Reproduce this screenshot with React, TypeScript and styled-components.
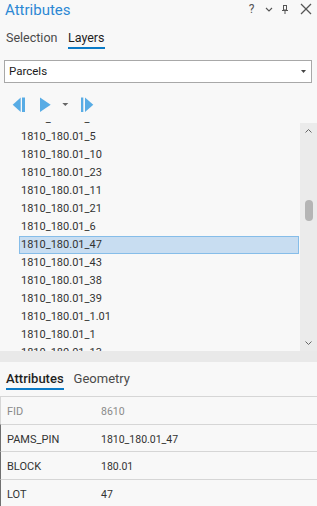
import React from "react";
import styled, { createGlobalStyle } from "styled-components";

const GlobalStyle = createGlobalStyle`
  html, body { margin: 0; padding: 0; background: #f8f8f8; }
  body { font-family: Roboto, "Liberation Sans", sans-serif; }
`;

const Pane = styled.div`
  width: 317px;
  height: 506px;
  overflow: hidden;
  background: #f8f8f8;
  display: flex;
  flex-direction: column;
  font-family: Roboto, "Liberation Sans", sans-serif;
  color: #333;
`;

const Header = styled.div`
  display: flex;
  align-items: flex-start;
  height: 21px;
  padding: 0 3px 0 5px;
`;

const Title = styled.div`
  font-size: 15px;
  line-height: 21px;
  color: #2d88d4;
`;

const Controls = styled.div`
  margin-left: auto;
  margin-top: 1px;
  display: flex;
  align-items: center;
`;

const CaptionButton = styled.div<{ $w: number; $ml?: number }>`
  width: ${(p) => p.$w}px;
  height: 16px;
  margin-left: ${(p) => p.$ml ?? 0}px;
  display: flex;
  align-items: center;
  justify-content: center;
  color: #555;
  font-size: 12px;
  line-height: 16px;
`;

const TabBar = styled.div<{ $top: number; $gap: number }>`
  display: flex;
  padding: ${(p) => p.$top}px 0 0 6px;
  gap: ${(p) => p.$gap}px;
`;

const Tab = styled.div<{ $active?: boolean; $size: number; $lh: number; $bold?: boolean }>`
  font-size: ${(p) => p.$size}px;
  line-height: ${(p) => p.$lh}px;
  padding-bottom: 1px;
  font-weight: ${(p) => (p.$bold ? 500 : 400)};
  color: ${(p) => (p.$active ? "#1f1f1f" : "#4a4a4a")};
  border-bottom: 2px solid ${(p) => (p.$active ? "#0a7ac6" : "transparent")};
`;

const Dropdown = styled.div`
  margin: 11px 5px 0 4px;
  height: 24px;
  box-sizing: border-box;
  border: 1px solid #a8a8a8;
  background: #ffffff;
  display: flex;
  align-items: center;
  justify-content: space-between;
  padding: 0 5px 0 4px;
  font-size: 11.5px;
  color: #1b1b1b;
`;

const Toolbar = styled.div`
  height: 31px;
  margin-top: 7px;
  display: flex;
  align-items: center;
  padding-left: 12px;
  padding-top: 1px;
  box-sizing: border-box;
`;

const NavIcon = styled.svg<{ $ml?: number }>`
  display: block;
  margin-left: ${(p) => p.$ml ?? 0}px;
  fill: #58ace5;
`;

const ListArea = styled.div`
  margin-top: 2px;
  height: 229px;
  display: flex;
`;

const Viewport = styled.div`
  flex: 1;
  overflow: hidden;
  padding: 0 1px 0 19px;
`;

const RowsInner = styled.div`
  margin-top: -12px;
`;

const ListRow = styled.div<{ $selected?: boolean }>`
  height: 18px;
  box-sizing: border-box;
  border: 1px solid ${(p) => (p.$selected ? "#86bde9" : "transparent")};
  background: ${(p) => (p.$selected ? "#c8ddf1" : "transparent")};
  padding-left: 1px;
  font-size: 11px;
  line-height: 16px;
  color: #333;
  white-space: nowrap;
`;

const Scrollbar = styled.div`
  width: 17px;
  margin-top: 1px;
  background: #ebebeb;
  display: flex;
  flex-direction: column;
  align-items: center;
`;

const ScrollArrow = styled.div`
  height: 16px;
  display: flex;
  align-items: center;
  justify-content: center;
`;

const Track = styled.div`
  flex: 1;
`;

const Thumb = styled.div<{ $offset: number }>`
  margin-top: ${(p) => p.$offset}px;
  width: 8px;
  height: 21px;
  border-radius: 4px;
  background: #b5b5b5;
`;

const Splitter = styled.div`
  height: 12px;
  background: #e9e9e9;
`;

const Table = styled.div`
  margin-top: 6px;
`;

const FieldRow = styled.div<{ $readOnly?: boolean }>`
  height: 27.5px;
  box-sizing: border-box;
  border-top: 1px solid #d6d6d6;
  border-left: 1px solid ${(p) => (p.$readOnly ? "#d6d6d6" : "#707070")};
  padding: 3px 0 0 6px;
  display: grid;
  grid-template-columns: 94px 1fr;
  align-items: center;
  color: ${(p) => (p.$readOnly ? "#8a8a8a" : "#333")};
`;

const FieldName = styled.div`
  font-size: 11px;
  line-height: 15px;
`;

const FieldValue = styled.div`
  font-size: 10.5px;
  line-height: 15px;
`;

const listItems = [
  "1810_180.01_4",
  "1810_180.01_5",
  "1810_180.01_10",
  "1810_180.01_23",
  "1810_180.01_11",
  "1810_180.01_21",
  "1810_180.01_6",
  "1810_180.01_47",
  "1810_180.01_43",
  "1810_180.01_38",
  "1810_180.01_39",
  "1810_180.01_1.01",
  "1810_180.01_1",
  "1810_180.01_13",
];

const fields = [
  { name: "FID", value: "8610", readOnly: true },
  { name: "PAMS_PIN", value: "1810_180.01_47" },
  { name: "BLOCK", value: "180.01" },
  { name: "LOT", value: "47" },
];

export default function App() {
  return (
    <>
      <GlobalStyle />
      <Pane>
        <Header>
          <Title>Attributes</Title>
          <Controls>
            <CaptionButton $w={15}>?</CaptionButton>
            <CaptionButton $w={16} $ml={2}>
              <svg width="16" height="16" viewBox="0 0 16 16">
                <polyline points="5,7 8,10 11,7" fill="none" stroke="#555" strokeWidth="1.1" />
              </svg>
            </CaptionButton>
            <CaptionButton $w={16}>
              <svg width="16" height="16" viewBox="0 0 16 16">
                <rect x="6.5" y="4.5" width="3" height="4.5" fill="none" stroke="#555" strokeWidth="1" />
                <line x1="5" y1="9.5" x2="11" y2="9.5" stroke="#555" strokeWidth="1" />
                <line x1="8" y1="9.5" x2="8" y2="13" stroke="#555" strokeWidth="1" />
              </svg>
            </CaptionButton>
            <CaptionButton $w={16} $ml={5}>
              <svg width="16" height="16" viewBox="0 0 16 16">
                <line x1="3" y1="3" x2="13" y2="13" stroke="#555" strokeWidth="1.2" />
                <line x1="13" y1="3" x2="3" y2="13" stroke="#555" strokeWidth="1.2" />
              </svg>
            </CaptionButton>
          </Controls>
        </Header>

        <TabBar $top={9} $gap={10.5}>
          <Tab $size={12.5} $lh={16}>Selection</Tab>
          <Tab $size={12.5} $lh={16} $active>
            Layers
          </Tab>
        </TabBar>

        <Dropdown>
          <span>Parcels</span>
          <svg width="5" height="3" viewBox="0 0 5 3">
            <polygon points="0,0 5,0 2.5,3" fill="#444" />
          </svg>
        </Dropdown>

        <Toolbar>
          <NavIcon width="14" height="16" viewBox="0 0 14 16">
            <polygon points="8.7,0.5 8.7,15 0.7,7.75" />
            <rect x="10" y="0.5" width="3" height="14.5" />
          </NavIcon>
          <NavIcon $ml={13} width="13" height="16" viewBox="0 0 13 16">
            <polygon points="1,0.5 1,15 11.7,7.75" />
          </NavIcon>
          <NavIcon $ml={10} width="7" height="16" viewBox="0 0 7 16">
            <polygon points="0.3,6 6.3,6 3.3,9" fill="#666" />
          </NavIcon>
          <NavIcon $ml={11} width="14" height="16" viewBox="0 0 14 16">
            <rect x="1" y="0.5" width="2.3" height="14.5" />
            <polygon points="5,0.5 5,15 13.3,7.75" />
          </NavIcon>
        </Toolbar>

        <ListArea>
          <Viewport>
            <RowsInner>
              {listItems.map((item, i) => (
                <ListRow key={item + i} $selected={item === "1810_180.01_47"}>
                  {item}
                </ListRow>
              ))}
            </RowsInner>
          </Viewport>
          <Scrollbar>
            <ScrollArrow>
              <svg width="7" height="4" viewBox="0 0 7 4">
                <polyline points="0.5,3.5 3.5,0.5 6.5,3.5" fill="none" stroke="#666" strokeWidth="1" />
              </svg>
            </ScrollArrow>
            <Track>
              <Thumb $offset={61} />
            </Track>
            <ScrollArrow>
              <svg width="7" height="4" viewBox="0 0 7 4">
                <polyline points="0.5,0.5 3.5,3.5 6.5,0.5" fill="none" stroke="#666" strokeWidth="1" />
              </svg>
            </ScrollArrow>
          </Scrollbar>
        </ListArea>

        <Splitter />

        <TabBar $top={8} $gap={10}>
          <Tab $size={13} $lh={17} $active $bold>
            Attributes
          </Tab>
          <Tab $size={13} $lh={17}>
            Geometry
          </Tab>
        </TabBar>

        <Table>
          {fields.map((f) => (
            <FieldRow key={f.name} $readOnly={f.readOnly}>
              <FieldName>{f.name}</FieldName>
              <FieldValue>{f.value}</FieldValue>
            </FieldRow>
          ))}
        </Table>
      </Pane>
    </>
  );
}
